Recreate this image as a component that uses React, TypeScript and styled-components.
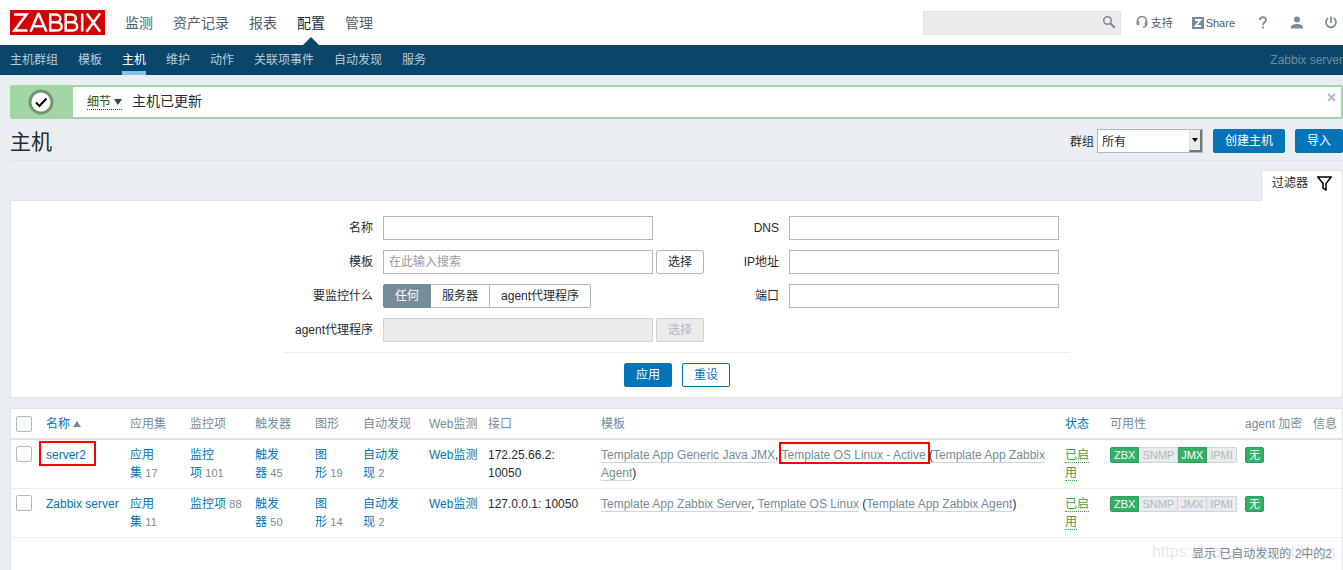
import React from "react";
import styled, { createGlobalStyle, css } from "styled-components";

const Global = createGlobalStyle`
  * { box-sizing: border-box; }
  body {
    margin: 0;
    background: #ebeef0;
    color: #1f2c33;
    font: 12px/18px "Liberation Sans", "Noto Sans CJK SC", sans-serif;
    overflow: hidden;
  }
  button, input, select { font: inherit; color: inherit; margin: 0; }
  a { text-decoration: none; }
`;

/* ---------- header ---------- */
const TopBar = styled.header`
  display: flex;
  align-items: center;
  height: 45px;
  padding-left: 10px;
  background: #fff;
`;
const Logo = styled.a`
  display: block;
  width: 95px;
  height: 25px;
  background: #d40000;
`;
const MainMenu = styled.nav`
  display: flex;
  align-self: stretch;
  gap: 20px;
  margin-left: 20px;
  flex: 1;
`;
const MainLink = styled.a<{ $active?: boolean }>`
  position: relative;
  height: 45px;
  font-size: 14px;
  line-height: 46px;
  color: ${(p) => (p.$active ? "#1f2c33" : "#4f5f68")};
  ${(p) => p.$active && css`
    &::after {
      content: "";
      position: absolute;
      left: 50%;
      bottom: 0;
      margin-left: -8px;
      border: 8px solid transparent;
      border-top: 0;
      border-bottom-color: #0a466a;
    }
  `}
`;
const Search = styled.form`
  display: flex;
  width: 198px;
  height: 24px;
  background: #ebebeb;
  border: 1px solid #dfe4e7;
`;
const SearchInput = styled.input`
  flex: 1;
  min-width: 0;
  border: 0;
  background: none;
`;
const IconButton = styled.button`
  display: flex;
  justify-content: center;
  width: 22px;
  padding: 3px 0 0;
  border: 0;
  background: none;
`;
const Tools = styled.nav`
  display: flex;
  align-items: center;
  height: 24px;
  margin-left: 14px;
  padding-right: 4px;
`;
const ToolLink = styled.a<{ $gap: number }>`
  display: flex;
  align-items: center;
  gap: 2px;
  margin-right: ${(p) => p.$gap}px;
  font-size: 11px;
  color: #4f5f68;
`;
const SubBar = styled.nav`
  display: flex;
  gap: 20px;
  height: 30px;
  padding-left: 10px;
  background: #0a466a;
`;
const SubLink = styled.a<{ $active?: boolean }>`
  height: 30px;
  line-height: 30px;
  color: ${(p) => (p.$active ? "#fff" : "#b9cbd6")};
  border-bottom: ${(p) => (p.$active ? "4px solid #7cc1f0" : "0")};
`;
const ServerName = styled.span`
  margin-left: auto;
  line-height: 30px;
  color: #6b8da2;
`;

/* ---------- message and title ---------- */
const Page = styled.main`
  padding: 10px 0 0 10px;
`;
const Message = styled.section`
  display: flex;
  align-items: center;
  height: 34px;
  border: 2px solid #a3d6a5;
  border-radius: 2px;
  background: #fff;
`;
const MessageIcon = styled.div`
  display: flex;
  align-items: center;
  justify-content: center;
  width: 61px;
  height: 30px;
  padding: 0 3px 1px 0;
  background: #a3d6a5;
`;
const Details = styled.button`
  display: flex;
  align-items: center;
  gap: 3px;
  height: 16px;
  margin: 0 10px 0 14px;
  padding: 0;
  border: 0;
  border-bottom: 1px dotted #24532a;
  background: none;
  color: #24532a;
`;
const MessageText = styled.span`
  flex: 1;
  padding-bottom: 2px;
  font-size: 14px;
`;
const Close = styled.button`
  align-self: flex-start;
  display: flex;
  margin: 6px 5px 0 0;
  padding: 0;
  border: 0;
  background: none;
`;
const TitleRow = styled.div`
  display: flex;
  align-items: center;
  height: 42px;
  padding-top: 2px;
  border-bottom: 1px solid #dfe4e7;
`;
const Title = styled.h1`
  flex: 1;
  margin: 0;
  padding-top: 2px;
  font-size: 21px;
  font-weight: 400;
  line-height: 28px;
`;
const GroupLabel = styled.label`
  margin-right: 3px;
  padding-top: 2px;
`;
const SelectBox = styled.div`
  position: relative;
  width: 106px;
  height: 24px;
  margin-right: 10px;
`;
const Select = styled.select`
  width: 100%;
  height: 24px;
  padding: 2px 4px 0;
  border: 1px solid #acbbc2;
  border-radius: 0;
  background: #fff;
  appearance: none;
`;
const SelectArrow = styled.span`
  position: absolute;
  top: 1px;
  right: 1px;
  display: flex;
  align-items: center;
  justify-content: center;
  width: 13px;
  height: 22px;
  background: #ebebeb;
  border-right: 2px solid #777;
  border-bottom: 2px solid #777;
  border-left: 1px solid #ddd;
  pointer-events: none;
`;
const Button = styled.button<{ $kind?: "primary" | "outline" | "plain" }>`
  height: 24px;
  padding: 0 11px;
  line-height: 22px;
  border-radius: 2px;
  border: 1px solid ${(p) => (p.$kind === "plain" ? "#acbbc2" : "#0275b8")};
  background: ${(p) => (p.$kind === "primary" ? "#0275b8" : "#fff")};
  color: ${(p) => (p.$kind === "primary" ? "#fff" : p.$kind === "outline" ? "#0275b8" : "#1f2c33")};
  &:disabled {
    border-color: #ccd5d9;
    background: #ebebeb;
    color: #acbbc2;
  }
`;
const TitleButtons = styled.div`
  display: flex;
  gap: 10px;
`;

/* ---------- filter ---------- */
const FilterTabRow = styled.div`
  display: flex;
  justify-content: flex-end;
  margin-top: 9px;
`;
const FilterTab = styled.button`
  position: relative;
  display: flex;
  align-items: center;
  justify-content: space-between;
  width: 82px;
  height: 31px;
  margin-bottom: -1px;
  padding: 0 10px 6px;
  border: 1px solid #dfe4e7;
  border-bottom: 0;
  background: #fff;
`;
const Filter = styled.form`
  padding: 15px 0 10px;
  border: 1px solid #dfe4e7;
  background: #fff;
`;
const FilterGrid = styled.div`
  display: flex;
  justify-content: center;
  width: 786px;
  margin: 0 auto;
  border-bottom: 1px solid #ebeef0;
  padding-bottom: 10px;
`;
const FilterColumn = styled.div<{ $labels: number }>`
  display: grid;
  grid-template-columns: ${(p) => p.$labels}px 321px;
  grid-auto-rows: 24px;
  gap: 10px;
  &:last-child { grid-template-columns: ${(p) => p.$labels}px 270px; margin-right: 10px; }
`;
const Label = styled.label`
  line-height: 24px;
  text-align: right;
`;
const Field = styled.div`
  display: flex;
  gap: 3px;
`;
const Input = styled.input`
  width: 270px;
  height: 24px;
  padding: 0 5px;
  border: 1px solid #acbbc2;
  border-radius: 0;
  background: #fff;
  &::placeholder { color: #9a9a9a; opacity: 1; }
  &:disabled { border-color: #ccd5d9; background: #ebebeb; }
`;
const Segments = styled.div`
  display: flex;
`;
const Segment = styled.label`
  height: 24px;
  padding: 0 11px;
  line-height: 22px;
  border: 1px solid #acbbc2;
  & + & { border-left-width: 0; }
  &:first-child { border-radius: 2px 0 0 2px; }
  &:last-child { border-radius: 0 2px 2px 0; }
  &:has(input:checked) { background: #768d99; border-color: #768d99; color: #fff; }
  input { position: absolute; opacity: 0; width: 1px; height: 1px; }
`;
const FilterButtons = styled.div`
  display: flex;
  justify-content: center;
  gap: 10px;
  padding: 10px 0 0 1px;
`;

/* ---------- table ---------- */
const TableBox = styled.section`
  position: relative;
  min-height: 180px;
  margin-top: 10px;
  border: 1px solid #dfe4e7;
  background: #fff;
`;
const Table = styled.table`
  width: 100%;
  table-layout: fixed;
  border-collapse: separate;
  border-spacing: 0;
`;
const Th = styled.th<{ $sortable?: boolean }>`
  height: 31px;
  padding: 0 0 0 5px;
  font-weight: 400;
  text-align: left;
  white-space: nowrap;
  color: #768d99;
  border-bottom: 2px solid #dfe4e7;
`;
const SortLink = styled.a`
  display: flex;
  align-items: center;
  gap: 3px;
  color: #0275b8;
`;
const Td = styled.td`
  height: 49px;
  padding: 6px 5px;
  vertical-align: top;
  border-bottom: 1px solid #ebeef0;
`;
const Check = styled.input`
  appearance: none;
  display: block;
  width: 16px;
  height: 16px;
  border: 1px solid #acbbc2;
  border-radius: 2px;
  background: #fff;
`;
const Link = styled.a`
  color: #0275b8;
`;
const Count = styled.span`
  font-size: 11px;
  color: #768d99;
`;
const TemplateLink = styled.a`
  color: #768d99;
  border-bottom: 1px solid #ccd5d9;
`;
const StatusLink = styled.a`
  color: #429e47;
  border-bottom: 1px dotted #429e47;
`;
const Marked = styled.span`
  position: relative;
`;
const Marker = styled.span<{ $box: string }>`
  position: absolute;
  inset: ${(p) => p.$box};
  border: 2px solid #f00;
  pointer-events: none;
`;
const Badges = styled.div`
  display: flex;
`;
const Badge = styled.span<{ $on?: boolean }>`
  height: 16px;
  margin-top: 1px;
  padding: 0 3px;
  font-size: 11px;
  line-height: 15px;
  border: 1px solid ${(p) => (p.$on ? "#2f9f5e" : "#ccd5d9")};
  background: ${(p) => (p.$on ? "#34af67" : "#ebebeb")};
  color: ${(p) => (p.$on ? "#fff" : "#acbbc2")};
  & + & { border-left-width: 0; }
  &:first-child { border-radius: 2px 0 0 2px; }
  &:last-child { border-radius: 0 2px 2px 0; }
  &:only-child { border-radius: 2px; }
`;
const Footer = styled.div`
  padding: 7px 10px;
  text-align: right;
  color: #768d99;
`;
const Watermark = styled.span`
  position: absolute;
  right: 6px;
  top: 132px;
  font-size: 16px;
  line-height: 22px;
  color: rgba(120, 130, 140, 0.2);
  pointer-events: none;
`;

const widths = [30, 84, 60, 65, 60, 48, 66, 59, 113, 0, 45, 135, 68, 34];

type Template = { name: string; marked?: boolean };
type Host = {
  name: string;
  marked?: boolean;
  counts: [string, number][];
  address: string;
  templates: Template[];
  available: string[];
};

const hosts: Host[] = [
  {
    name: "server2",
    marked: true,
    counts: [["应用集", 17], ["监控项", 101], ["触发器", 45], ["图形", 19], ["自动发现", 2]],
    address: "172.25.66.2: 10050",
    templates: [{ name: "Template App Generic Java JMX" }, { name: "Template OS Linux - Active", marked: true }],
    available: ["ZBX", "JMX"],
  },
  {
    name: "Zabbix server",
    counts: [["应用集", 11], ["监控项", 88], ["触发器", 50], ["图形", 14], ["自动发现", 2]],
    address: "127.0.0.1: 10050",
    templates: [{ name: "Template App Zabbix Server" }, { name: "Template OS Linux" }],
    available: ["ZBX"],
  },
];

const mainItems = ["监测", "资产记录", "报表", "配置", "管理"];
const subItems = ["主机群组", "模板", "主机", "维护", "动作", "关联项事件", "自动发现", "服务"];
const interfaces = ["ZBX", "SNMP", "JMX", "IPMI"];

const HostRow = ({ host }: { host: Host }) => (
  <tr>
    <Td><Check type="checkbox" aria-label={host.name} /></Td>
    <Td>
      <Marked>
        <Link href="#">{host.name}</Link>
        {host.marked && <Marker $box="-7px -10px -4px -7px" />}
      </Marked>
    </Td>
    {host.counts.map(([label, n]) => (
      <Td key={label}><Link href="#">{label}</Link>{"\u00a0"}<Count>{n}</Count></Td>
    ))}
    <Td><Link href="#">Web监测</Link></Td>
    <Td>{host.address}</Td>
    <Td>
      {host.templates.map((t, i) => (
        <React.Fragment key={t.name}>
          {i > 0 && ", "}
          <Marked>
            <TemplateLink href="#">{t.name}</TemplateLink>
            {t.marked && <Marker $box="-6px -4px -2px -3px" />}
          </Marked>
        </React.Fragment>
      ))}
      {" ("}<TemplateLink href="#">Template App Zabbix Agent</TemplateLink>)
    </Td>
    <Td><StatusLink href="#">已启用</StatusLink></Td>
    <Td>
      <Badges>
        {interfaces.map((n) => <Badge key={n} $on={host.available.includes(n)}>{n}</Badge>)}
      </Badges>
    </Td>
    <Td><Badges><Badge $on>无</Badge></Badges></Td>
    <Td />
  </tr>
);

export default function App() {
  return (
    <>
      <Global />
      <TopBar>
        <Logo href="#" aria-label="ZABBIX">
          <svg width="95" height="25" viewBox="0 0 95 25" fill="none" stroke="#fff" strokeWidth="2.5">
            <path d="M4 4.6h12.6L4.4 20.6h13" />
            <path d="M20.5 21.8 28.2 4h.6l7.7 17.8M23.2 16.2h10.6" />
            <path d="M40.2 4.6h5.6c6 0 6 7.6 0 7.6h-5.6h6.2c7 0 7 8.4 0 8.4h-6.2z" />
            <path d="M55.7 4.6h5.6c6 0 6 7.6 0 7.6h-5.6h6.2c7 0 7 8.4 0 8.4h-6.2z" />
            <path d="M72.2 3.5v18.2" />
            <path d="M76.8 3.5l13.4 18.2M90 3.5 76.6 21.7" />
          </svg>
        </Logo>
        <MainMenu>
          {mainItems.map((t) => <MainLink key={t} href="#" $active={t === "配置"}>{t}</MainLink>)}
        </MainMenu>
        <Search>
          <SearchInput aria-label="搜索" />
          <IconButton type="button" aria-label="搜索">
            <svg width="14" height="14" viewBox="0 0 14 14" fill="none" stroke="#768d99">
              <circle cx="5.5" cy="5.5" r="3.8" strokeWidth="1.6" />
              <path d="m8.500 8.500 4.300 4.300" strokeWidth="2" />
            </svg>
          </IconButton>
        </Search>
        <Tools>
          <ToolLink href="#" $gap={19}>
            <svg width="14" height="14" viewBox="0 0 14 14" fill="none" stroke="#768d99" strokeWidth="1.5">
              <path d="M2.500 8V5a4.500 4.500 0 0 1 9 0v3c0 2-1 3-3.500 3" />
              <path d="M3 5.500v3.500M11 5.500v3.500" strokeWidth="2.5" />
            </svg>
            支持
          </ToolLink>
          <ToolLink href="#" $gap={23}>
            <svg width="12" height="12" viewBox="0 0 12 12">
              <path fill="#768d99" d="M0 0h12v12H0z" />
              <path d="M3 3h5.500L3.500 9H9" fill="none" stroke="#fff" strokeWidth="1.8" />
            </svg>
            Share
          </ToolLink>
          <ToolLink href="#" $gap={23} aria-label="帮助">
            <svg width="10" height="14" viewBox="0 0 10 14" fill="none" stroke="#768d99" strokeWidth="1.8">
              <path d="M2 4C2 .3 8 .3 8 3.800 8 6 5 6 5 9M5 10.500v2" />
            </svg>
          </ToolLink>
          <ToolLink href="#" $gap={22} aria-label="用户">
            <svg width="12" height="14" viewBox="0 0 12 14" fill="#768d99">
              <circle cx="6" cy="3.5" r="3" />
              <path d="M0 12.500V11C0 9 3 8 6 8s6 1 6 3v1.500z" />
            </svg>
          </ToolLink>
          <ToolLink href="#" $gap={2} aria-label="退出">
            <svg width="12" height="14" viewBox="0 0 12 14" fill="none" stroke="#768d99" strokeWidth="1.7">
              <path d="M6 .5V7M3 2.300a5 5 0 1 0 6 0" />
            </svg>
          </ToolLink>
        </Tools>
      </TopBar>
      <SubBar>
        {subItems.map((t) => <SubLink key={t} href="#" $active={t === "主机"}>{t}</SubLink>)}
        <ServerName>Zabbix server</ServerName>
      </SubBar>
      <Page>
        <Message>
          <MessageIcon>
            <svg width="26" height="26" viewBox="0 0 26 26" fill="none">
              <circle cx="13" cy="13" r="11" fill="#fff" stroke="#73966f" strokeWidth="3" />
              <path d="m8 13.500 3.500 3.500 7-7.500" stroke="#000" strokeWidth="2" />
            </svg>
          </MessageIcon>
          <Details type="button">
            细节
            <svg width="8" height="6"><path d="M0 0h8L4 6z" fill="#24532a" /></svg>
          </Details>
          <MessageText>主机已更新</MessageText>
          <Close type="button" aria-label="关闭">
            <svg width="9" height="9" viewBox="0 0 9 9"><path d="m1 1 7 7M8 1 1 8" stroke="#acbbc2" strokeWidth="2" /></svg>
          </Close>
        </Message>
        <TitleRow>
          <Title>主机</Title>
          <GroupLabel htmlFor="group">群组</GroupLabel>
          <SelectBox>
            <Select id="group"><option>所有</option></Select>
            <SelectArrow><svg width="6" height="4"><path d="M0 0h6L3 4z" /></svg></SelectArrow>
          </SelectBox>
          <TitleButtons>
            <Button type="button" $kind="primary">创建主机</Button>
            <Button type="button" $kind="primary">导入</Button>
          </TitleButtons>
        </TitleRow>
        <FilterTabRow>
          <FilterTab type="button">
            过滤器
            <svg width="15" height="15" viewBox="0 0 15 15" fill="none" stroke="#000" strokeWidth="1.5">
              <path d="M.8 1h13.400L9 7.500V14L6 12V7.500z" />
            </svg>
          </FilterTab>
        </FilterTabRow>
        <Filter>
          <FilterGrid>
            <FilterColumn $labels={89}>
              <Label htmlFor="name">名称</Label>
              <Field><Input id="name" /></Field>
              <Label htmlFor="tpl">模板</Label>
              <Field>
                <Input id="tpl" placeholder="在此输入搜索" />
                <Button type="button" $kind="plain">选择</Button>
              </Field>
              <Label as="span">要监控什么</Label>
              <Segments>
                {["任何", "服务器", "agent代理程序"].map((t, i) => (
                  <Segment key={t}><input type="radio" name="by" defaultChecked={i === 0} />{t}</Segment>
                ))}
              </Segments>
              <Label htmlFor="proxy">agent代理程序</Label>
              <Field>
                <Input id="proxy" disabled />
                <Button type="button" $kind="plain" disabled>选择</Button>
              </Field>
            </FilterColumn>
            <FilterColumn $labels={75}>
              <Label htmlFor="dns">DNS</Label>
              <Field><Input id="dns" /></Field>
              <Label htmlFor="ip">IP地址</Label>
              <Field><Input id="ip" /></Field>
              <Label htmlFor="port">端口</Label>
              <Field><Input id="port" /></Field>
            </FilterColumn>
          </FilterGrid>
          <FilterButtons>
            <Button type="button" $kind="primary">应用</Button>
            <Button type="button" $kind="outline">重设</Button>
          </FilterButtons>
        </Filter>
        <TableBox>
          <Table>
            <colgroup>
              {widths.map((w, i) => <col key={i} style={w ? { width: w } : undefined} />)}
            </colgroup>
            <thead>
              <tr>
                <Th><Check type="checkbox" aria-label="全选" /></Th>
                <Th>
                  <SortLink href="#">
                    名称
                    <svg width="8" height="6"><path d="M0 6h8L4 0z" fill="#768d99" /></svg>
                  </SortLink>
                </Th>
                {["应用集", "监控项", "触发器", "图形", "自动发现", "Web监测", "接口", "模板"].map((t) => <Th key={t}>{t}</Th>)}
                <Th><SortLink href="#">状态</SortLink></Th>
                <Th>可用性</Th>
                <Th>agent 加密</Th>
                <Th>信息</Th>
              </tr>
            </thead>
            <tbody>
              {hosts.map((h) => <HostRow key={h.name} host={h} />)}
            </tbody>
          </Table>
          <Footer>显示 已自动发现的 2中的2</Footer>
          <Watermark>https://blog.csdn.net/lilygg</Watermark>
        </TableBox>
      </Page>
    </>
  );
}
